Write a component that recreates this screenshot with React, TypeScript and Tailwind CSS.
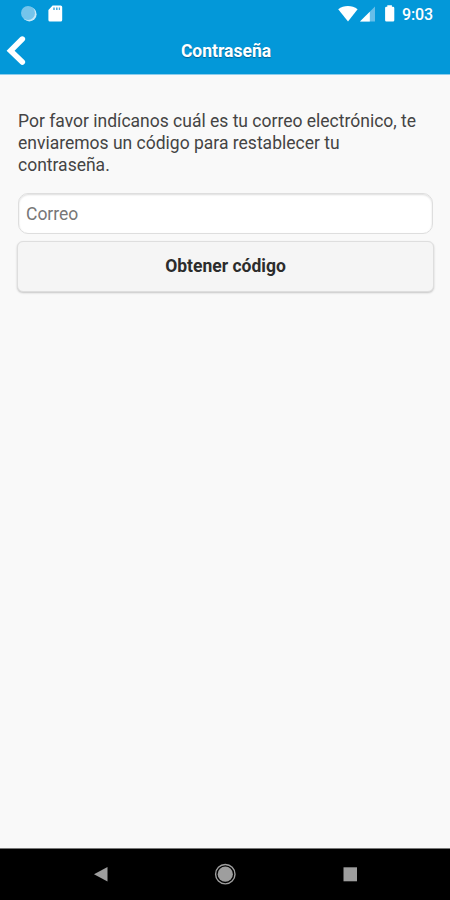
function StatusBar() {
  return (
    <div className="flex h-7 items-start justify-between">
      <svg width="80" height="28" viewBox="0 0 80 28" aria-hidden="true">
        <circle cx="29.4" cy="14.2" r="7.2" fill="#c5e8f8" />
        <circle cx="28" cy="13" r="7" fill="#74c4eb" />
        <path d="M52.6 5.5h8a1.6 1.6 0 0 1 1.6 1.6v12.8a1.6 1.6 0 0 1-1.6 1.6H50a1.6 1.6 0 0 1-1.6-1.6V10z" fill="#fff" />
        <path d="M53.2 7.5h1.6v2.6h-1.6zM56 7.5h1.6v2.6H56zM58.8 7.5h1.2v2.6h-1.2z" fill="#4baee0" />
      </svg>
      <div className="flex pr-[17px]">
        <svg width="65" height="28" viewBox="336 0 65 28" aria-hidden="true">
          <path d="M338.2 9.2C343.8 4.9 352 4.9 357.6 9.2L348 21.6z" fill="#fff" />
          <path d="M375 6.5v15h-15z" fill="#66bee9" />
          <path d="M369.8 11.7v9.8H360z" fill="#fff" />
          <path d="M387.3 5.3h4.6v1.5h1.1a1.3 1.3 0 0 1 1.3 1.3v12.1a1.3 1.3 0 0 1-1.3 1.3h-6.6a1.3 1.3 0 0 1-1.3-1.3V8.1a1.3 1.3 0 0 1 1.3-1.3h.9z" fill="#fff" />
        </svg>
        <span className="mt-[5px] ml-[1px] w-[31px] text-[16px] leading-5 font-medium tracking-[-0.1px] whitespace-nowrap text-white">9:03</span>
      </div>
    </div>
  );
}

function Header() {
  return (
    <header className="h-[75px] shrink-0 border-b border-[#8ccdec] bg-[#0398d9]">
      <StatusBar />
      <div className="grid h-[46px] grid-cols-[60px_1fr_60px] items-start">
        <button type="button" aria-label="Volver">
          <svg width="40" height="44" viewBox="0 28 40 44" fill="none">
            <path d="M22.3 39.1 10.6 50.8l11.7 11.3" stroke="#fff" strokeWidth="5.6" strokeLinecap="round" />
          </svg>
        </button>
        <h1 className="mt-[13px] ml-[2px] text-center text-[17.5px] leading-5 font-bold text-white [text-shadow:0_1px_1px_#006494]">
          Contraseña
        </h1>
      </div>
    </header>
  );
}

function NavigationBar() {
  return (
    <nav className="h-[52px] shrink-0 border-t border-[#777] bg-black">
      <svg width="450" height="51" viewBox="0 849 450 51" fill="#9e9e9e">
        <path d="M107.5 867v14.4L94 874.2z" />
        <circle cx="225.3" cy="874.2" r="9.7" fill="none" stroke="#9e9e9e" strokeWidth="1.4" />
        <circle cx="225.3" cy="874.2" r="7.6" />
        <path d="M343.5 867.3H357v14h-13.5z" />
      </svg>
    </nav>
  );
}

export default function App() {
  return (
    <div className="flex h-[900px] w-[450px] flex-col overflow-hidden bg-[#f9f9f9] font-[Roboto,sans-serif]">
      <Header />
      <main className="flex flex-1 flex-col pt-[35px] pr-4 pl-[17px]">
        <p className="pl-[1px] text-[17.5px] leading-[22px] whitespace-nowrap text-[#444]">
          Por favor indícanos cuál es tu correo electrónico, te
          <br />
          enviaremos un código para restablecer tu
          <br />
          contraseña.
        </p>
        <input
          type="email"
          placeholder="Correo"
          className="mt-[17px] mr-[1px] ml-[1px] h-[41px] rounded-[10px] border border-[#dedede] bg-white px-[7px] text-[17.5px] text-[#444] shadow-[inset_0_1px_2px_#ddd] outline-none placeholder:text-[#777]"
        />
        <button
          type="button"
          className="mt-[7px] h-[51px] rounded-[6px] border border-[#dedede] bg-[#f5f5f5] text-[17.5px] font-bold text-[#2c2c2c] shadow-[0_1px_2px_#c5c5c5]"
        >
          Obtener código
        </button>
      </main>
      <NavigationBar />
    </div>
  );
}
